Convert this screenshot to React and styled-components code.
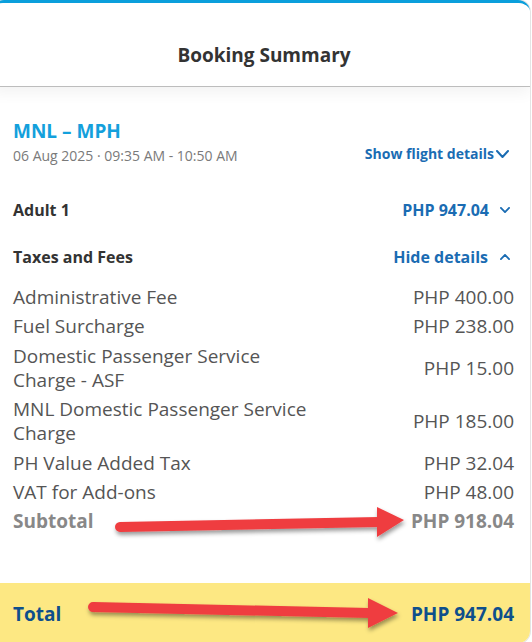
import React from "react";
import styled, { createGlobalStyle } from "styled-components";

const GlobalStyle = createGlobalStyle`
  html, body { margin: 0; padding: 0; background: #ffffff; }
  body { font-family: "Open Sans", "Noto Sans", Arial, sans-serif; -webkit-font-smoothing: antialiased; }
  * { box-sizing: border-box; }
`;

const Page = styled.div`
  position: relative;
  width: 532px;
  height: 642px;
  overflow: hidden;
`;

const Card = styled.div`
  margin-left: -8px;
  width: 538px;
  background: #ffffff;
  border-top: 3px solid #0a9fdc;
  border-radius: 12px;
  box-shadow: 0 0 0 1px #e4e4e4;
  overflow: hidden;
`;

const Header = styled.header`
  position: relative;
  z-index: 1;
  background: #ffffff;
  padding: 38px 0 17px;
  text-align: center;
  border-bottom: 1px solid #bdbdbd;
  box-shadow: 0 6px 14px rgba(0, 0, 0, 0.05);
`;

const Title = styled.h2`
  margin: 0;
  font-size: 19px;
  line-height: 28px;
  font-weight: 700;
  color: #333333;
  padding-left: 6px;
`;

const Body = styled.div`
  padding: 32px 16px 50px 21px;
`;

const Route = styled.div`
  font-size: 19px;
  line-height: 24px;
  font-weight: 700;
  color: #13a0dc;
`;

const Row = styled.div`
  display: flex;
  justify-content: space-between;
  align-items: center;
  margin-top: ${(p) => p.$mt || 0}px;
`;

const DateText = styled.span`
  font-size: 14px;
  line-height: 20px;
  color: #7a7a7a;
`;

const Link = styled.span`
  display: inline-flex;
  align-items: center;
  gap: ${(p) => p.$gap || 2}px;
  font-size: ${(p) => p.$size || 14}px;
  line-height: 18px;
  font-weight: 700;
  color: #1a6cb3;
  margin-right: ${(p) => p.$mr || 0}px;
  position: relative;
  top: ${(p) => p.$top || 0}px;
`;

const SectionLabel = styled.span`
  font-size: 16px;
  line-height: 22px;
  font-weight: 700;
  color: #333333;
`;

const FeeList = styled.div`
  display: flex;
  flex-direction: column;
  gap: 5.4px;
  margin-top: 17px;
`;

const FeeRow = styled.div`
  display: flex;
  justify-content: space-between;
  align-items: center;
  font-size: 19px;
  line-height: 24px;
  font-weight: ${(p) => (p.$strong ? 700 : 400)};
  color: ${(p) => (p.$strong ? "#888888" : "#555555")};
`;

const FeeLabel = styled.span`
  max-width: 310px;
`;

const FeeAmount = styled.span`
  white-space: nowrap;
`;

const TotalBar = styled.div`
  display: flex;
  justify-content: space-between;
  align-items: center;
  background: #fde883;
  padding: 19px 16px 17px 21px;
  font-size: 19px;
  line-height: 24px;
  font-weight: 700;
  color: #0e4f8c;
`;

const Overlay = styled.svg`
  position: absolute;
  left: 0;
  top: 0;
  pointer-events: none;
`;

const Chevron = ({ up, w = 12, h = 7, sw = 2 }) => (
  <svg width={w} height={h} viewBox={`0 0 ${w} ${h}`} fill="none">
    <polyline
      points={
        up
          ? `${sw / 2},${h - sw / 2} ${w / 2},${sw / 2} ${w - sw / 2},${h - sw / 2}`
          : `${sw / 2},${sw / 2} ${w / 2},${h - sw / 2} ${w - sw / 2},${sw / 2}`
      }
      stroke="currentColor"
      strokeWidth={sw}
      strokeLinecap="round"
      strokeLinejoin="round"
    />
  </svg>
);

const fees = [
  ["Administrative Fee", "PHP 400.00"],
  ["Fuel Surcharge", "PHP 238.00"],
  ["Domestic Passenger Service Charge - ASF", "PHP 15.00"],
  ["MNL Domestic Passenger Service Charge", "PHP 185.00"],
  ["PH Value Added Tax", "PHP 32.04"],
  ["VAT for Add-ons", "PHP 48.00"],
];

const Arrow = ({ x1, y1, bx, by, tip, top, bottom }) => (
  <g filter="url(#arrowShadow)">
    <line x1={x1} y1={y1} x2={bx + 2} y2={by} stroke="#ef3d40" strokeWidth="10" strokeLinecap="round" />
    <polygon points={`${bx},${top} ${tip[0]},${tip[1]} ${bx},${bottom}`} fill="#ef3d40" />
  </g>
);

export default function App() {
  return (
    <Page>
      <GlobalStyle />
      <Card>
        <Header>
          <Title>Booking Summary</Title>
        </Header>
        <Body>
          <Route>MNL – MPH</Route>
          <Row $mt={3}>
            <DateText>06 Aug 2025 · 09:35 AM - 10:50 AM</DateText>
            <Link $top={-2} $mr={5}>
              Show flight details
              <Chevron w={13} h={8} sw={2} />
            </Link>
          </Row>
          <Row $mt={33}>
            <SectionLabel>Adult 1</SectionLabel>
            <Link $size={16} $gap={11} $mr={4}>
              PHP 947.04
              <Chevron w={10} h={6} sw={1.8} />
            </Link>
          </Row>
          <Row $mt={25}>
            <SectionLabel>Taxes and Fees</SectionLabel>
            <Link $size={16} $gap={12} $mr={4}>
              Hide details
              <Chevron up w={10} h={6} sw={1.8} />
            </Link>
          </Row>
          <FeeList>
            {fees.map(([label, amount]) => (
              <FeeRow key={label}>
                <FeeLabel>{label}</FeeLabel>
                <FeeAmount>{amount}</FeeAmount>
              </FeeRow>
            ))}
            <FeeRow $strong>
              <FeeLabel>Subtotal</FeeLabel>
              <FeeAmount>PHP 918.04</FeeAmount>
            </FeeRow>
          </FeeList>
        </Body>
        <TotalBar>
          <span>Total</span>
          <span>PHP 947.04</span>
        </TotalBar>
      </Card>
      <Overlay width="532" height="642" viewBox="0 0 532 642">
        <defs>
          <filter id="arrowShadow" x="-10%" y="-50%" width="120%" height="200%">
            <feDropShadow dx="1" dy="3" stdDeviation="2" floodColor="#000" floodOpacity="0.4" />
          </filter>
        </defs>
        <Arrow x1={120} y1={527} bx={377} by={522} tip={[404, 520]} top={507} bottom={537} />
        <Arrow x1={93} y1={607} bx={368} by={613} tip={[398, 613]} top={598} bottom={628} />
      </Overlay>
    </Page>
  );
}
